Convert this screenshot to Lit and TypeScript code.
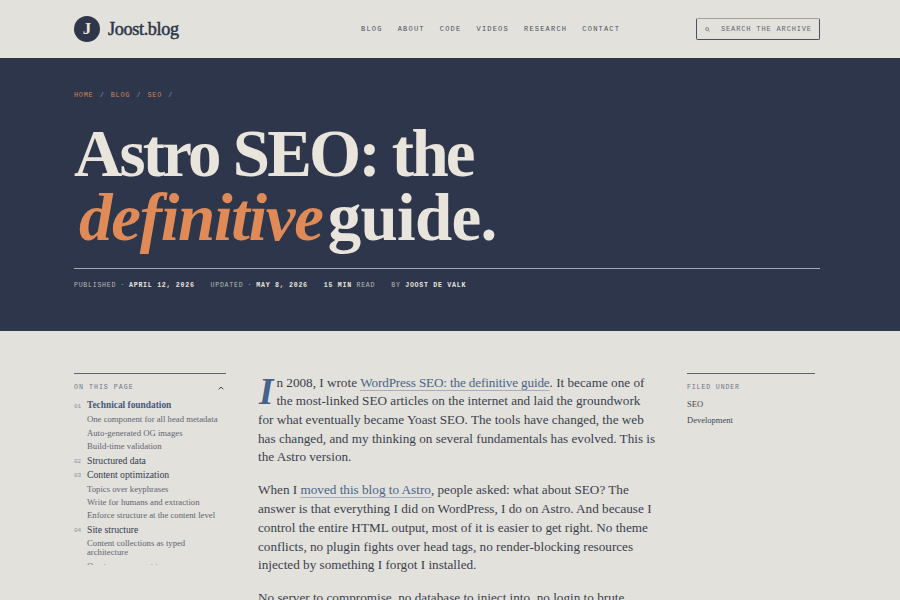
import { LitElement, html, css } from "lit";
import { customElement } from "lit/decorators.js";

const NAV = ["Blog", "About", "Code", "Videos", "Research", "Contact"];
const TOC = [
  { n: "01", t: "Technical foundation", active: true, s: ["One component for all head metadata", "Auto-generated OG images", "Build-time validation"] },
  { n: "02", t: "Structured data", s: [] },
  { n: "03", t: "Content optimization", s: ["Topics over keyphrases", "Write for humans and extraction", "Enforce structure at the content level"] },
  { n: "04", t: "Site structure", s: ["Content collections as typed architecture", "One taxonomy, not two"] },
];

@customElement("app-root")
export class AppRoot extends LitElement {
  static styles = css`
    :host { display: block; height: 600px; overflow: hidden; background: #e2e1dc; color: #2d364a; font-family: "Liberation Serif", serif; }
    a { color: inherit; text-decoration: none; }
    .wrap { width: 746px; margin-left: 74px; }
    .mono { font-family: "Liberation Mono", monospace; text-transform: uppercase; }
    header { height: 58px; }
    header .wrap { height: 100%; display: flex; align-items: center; }
    .logo { display: flex; align-items: center; gap: 8px; width: 287px; }
    .mark { width: 26px; height: 26px; border-radius: 50%; background: #2d364a; color: #e9e5dc; display: flex; align-items: center; justify-content: center; font-size: 17px; font-weight: 700; }
    .name { font-size: 18.2px; letter-spacing: -0.35px; -webkit-text-stroke: 0.5px #2d364a; }
    nav { display: flex; gap: 15.1px; font-size: 7px; letter-spacing: 1.2px; color: #4a505e; }
    .search { margin-left: auto; width: 124px; height: 22px; box-sizing: border-box; border: 1px solid #4a505e; border-top-color: #a0a19f; border-radius: 2px; display: flex; align-items: center; gap: 11px; padding-left: 8px; font-size: 7px; letter-spacing: 0.85px; color: #5f6572; }
    .search svg { width: 5px; height: 5px; flex: none; }
    .hero { height: 273px; background: #2d364a; color: #e9e5dc; box-sizing: border-box; padding-top: 33px; }
    .crumbs { display: flex; gap: 6.3px; font-size: 6.8px; letter-spacing: 0.75px; line-height: 8px; color: #d08558; }
    .crumbs i { font-style: normal; color: #8f96a3; }
    h1 { margin: 22px 0 19px; font-weight: 700; font-size: 67px; line-height: 64px; letter-spacing: -2.8px; }
    h1 em { color: #e08a57; padding-left: 5px; margin-right: 5px; letter-spacing: -1.3px; font-weight: 700; }
    h1 .g { letter-spacing: -0.75px; }
    .meta { border-top: 1px solid #a6aaa9; padding-top: 12px; display: flex; gap: 16px; font-size: 6.6px; letter-spacing: 0.72px; line-height: 9px; color: #b9bab6; }
    .meta b { color: #e9e5dc; font-weight: 700; }
    .dot { display: inline-block; width: 13px; text-align: center; }
    .cols { display: flex; padding-top: 42px; height: 227px; box-sizing: border-box; }
    .side { width: 152px; flex: none; height: 192px; overflow: hidden; border-top: 1px solid #5c6272; box-sizing: border-box; }
    .label { font-size: 6.6px; letter-spacing: 1.02px; color: #6e7684; display: flex; justify-content: space-between; align-items: center; line-height: 8px; margin-top: 10px; }
    .label svg { width: 6px; height: 4px; margin-right: 2px; }
    .toc { margin: 8px 0 0; padding: 0; list-style: none; }
    .item { display: grid; grid-template-columns: 13px 1fr; margin-bottom: 2.6px; }
    .num { font-family: "Liberation Mono", monospace; font-size: 6px; color: #8c929d; line-height: 11px; padding-top: 1px; }
    .tt { font-size: 9.7px; line-height: 11px; color: #343b4c; }
    .active .tt { font-weight: 700; font-size: 9.4px; color: #46597a; }
    .subs { padding-bottom: 1.2px; }
    .sub { font-size: 8.7px; line-height: 9px; color: #5f6572; margin-top: 4.3px; }
    article { width: 398px; flex: none; margin: 0 31px 0 32px; font-size: 13.2px; line-height: 18.7px; color: #3a3f4c; padding-top: 0.5px; }
    article p { margin: 0 0 14.4px; }
    article a { color: #4a6487; border-bottom: 1px solid #a6aebb; }
    article a.tight { letter-spacing: -0.15px; }
    .drop { float: left; font-size: 37px; line-height: 30px; font-style: italic; font-weight: 700; color: #46628a; margin: 3px 3px 0 1px; }
    .filed { border-top: 1px solid #5c6272; width: 128px; height: 60px; flex: none; }
    .filed .tag { font-size: 8.5px; line-height: 10px; color: #3f4553; margin-top: 6px; }
    .filed .label { margin-bottom: 7px; letter-spacing: 0.85px; }
  `;

  render() {
    return html`
      <header><div class="wrap">
        <a class="logo"><span class="mark">J</span><span class="name">Joost.blog</span></a>
        <nav class="mono">${NAV.map((n) => html`<a>${n}</a>`)}</nav>
        <div class="search mono">
          <svg viewBox="0 0 12 12" fill="none" stroke="#5f6572" stroke-width="1.6"><circle cx="5" cy="5" r="3.6"/><path d="M8 8l3 3"/></svg>
          <span>Search the archive</span>
        </div>
      </div></header>
      <section class="hero"><div class="wrap">
        <div class="crumbs mono"><a>Home</a><i>/</i><a>Blog</a><i>/</i><a>SEO</a><i>/</i></div>
        <h1>Astro SEO: the<br /><em>definitive</em><span class="g">guide.</span></h1>
        <div class="meta mono">
          <span>Published<span class="dot">·</span><b>April 12, 2026</b></span>
          <span>Updated<span class="dot">·</span><b>May 8, 2026</b></span>
          <span><b>15 min</b> read</span>
          <span>By <b>Joost de Valk</b></span>
        </div>
      </div></section>
      <div class="wrap cols">
        <aside class="side">
          <div class="label mono"><span>On this page</span><svg viewBox="0 0 6 4" fill="none" stroke="#3d4454" stroke-width="1"><path d="M.7 3.3 3 1l2.3 2.3"/></svg></div>
          <ul class="toc">
            ${TOC.map((i) => html`<li class="item ${i.active ? "active" : ""}">
              <span class="num">${i.n}</span>
              <div><div class="tt">${i.t}</div>${i.s.length ? html`<div class="subs">${i.s.map((s) => html`<div class="sub">${s}</div>`)}</div>` : ""}</div>
            </li>`)}
          </ul>
        </aside>
        <article>
          <p><span class="drop">I</span>n 2008, I wrote <a class="tight">WordPress SEO: the definitive guide</a>. It became one of the most-linked SEO articles on the internet and laid the groundwork for what eventually became Yoast SEO. The tools have changed, the web has changed, and my thinking on several fundamentals has evolved. This is the Astro version.</p>
          <p>When I <a>moved this blog to Astro</a>, people asked: what about SEO? The answer is that everything I did on WordPress, I do on Astro. And because I control the entire HTML output, most of it is easier to get right. No theme conflicts, no plugin fights over head tags, no render-blocking resources injected by something I forgot I installed.</p>
          <p>No server to compromise, no database to inject into, no login to brute force.</p>
        </article>
        <aside class="filed">
          <div class="label mono"><span>Filed under</span></div>
          <div class="tag">SEO</div>
          <div class="tag">Development</div>
        </aside>
      </div>
    `;
  }
}
